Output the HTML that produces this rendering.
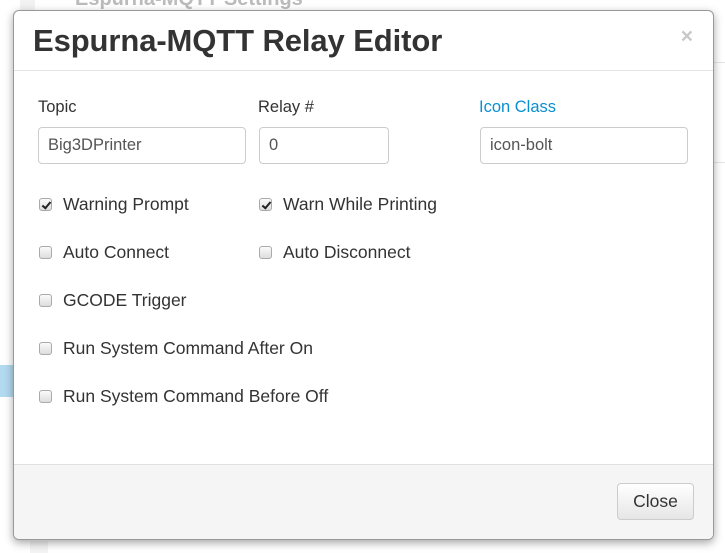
<!DOCTYPE html>
<html><head><meta charset="utf-8"><style>
*{box-sizing:border-box;margin:0;padding:0}
body{width:725px;height:553px;overflow:hidden;background:#fff;font-family:"Liberation Sans",Arial,sans-serif;position:relative;color:#333}
.bgt{position:absolute;left:75px;top:-12px;font-size:20px;font-weight:bold;color:#bbb}
.modal{position:absolute;left:13px;top:10px;width:701px;height:530px;background:#fff;border:1px solid #999;border-radius:6px;box-shadow:0 3px 9px rgba(0,0,0,.35);overflow:hidden}
.hdr{position:absolute;left:0;top:0;right:0;height:60px;border-bottom:1px solid #e5e5e5}
.title{position:absolute;left:19px;top:12px;font-size:31px;font-weight:bold;color:#333;letter-spacing:-0.1px}
.x{position:absolute;right:20px;top:14px;font-size:21px;font-weight:bold;color:#c8c8c8}
.lbl{position:absolute;font-size:16.5px;color:#333}
.inp{position:absolute;height:37px;border:1px solid #ccc;border-radius:4px;font-size:16.5px;padding:8px 9px;color:#555}
.cb{position:absolute;width:13px;height:13px;border:1px solid #aaa;border-radius:3px;background:linear-gradient(#fafafa,#ddd)}
.cb.on::after{content:"";position:absolute;left:3.5px;top:0.5px;width:3px;height:7px;border:solid #222;border-width:0 2px 2px 0;transform:rotate(40deg)}
.ct{position:absolute;font-size:17.5px;color:#333}
.ftr{position:absolute;left:0;right:0;bottom:0;height:75px;background:#f5f5f5;border-top:1px solid #e0e0e0}
.btn{position:absolute;right:19px;top:18px;width:77px;height:37px;border:1px solid #ccc;border-radius:4px;background:linear-gradient(#fff,#e6e6e6);font-size:17.5px;text-align:center;line-height:35px;color:#333}
</style></head><body>
<div class="bgt">Espurna-MQTT Settings</div>
<div style="position:absolute;left:20px;top:0;width:15px;height:10px;background:#f2f2f2"></div>
<div style="position:absolute;left:0;top:365px;width:13px;height:32px;background:#b3daf0"></div>
<div style="position:absolute;left:714px;top:62px;width:11px;height:1px;background:#e5e5e5"></div>
<div style="position:absolute;left:714px;top:162px;width:11px;height:1px;background:#e5e5e5"></div>
<div style="position:absolute;left:30px;top:541px;width:18px;height:12px;background:#f4f4f4"></div>
<div class="modal">
 <div class="hdr"><div class="title">Espurna-MQTT Relay Editor</div><div class="x">×</div></div>
 <div class="lbl" style="left:24px;top:87px">Topic</div>
 <div class="lbl" style="left:244px;top:87px">Relay #</div>
 <div class="lbl" style="left:465px;top:87px;color:#0a8fd0">Icon Class</div>
 <div class="inp" style="left:24px;top:116px;width:208px">Big3DPrinter</div>
 <div class="inp" style="left:245px;top:116px;width:130px">0</div>
 <div class="inp" style="left:466px;top:116px;width:208px">icon-bolt</div>

 <div class="cb on" style="left:25px;top:187px"></div><div class="ct" style="left:49px;top:183px">Warning Prompt</div>
 <div class="cb on" style="left:245px;top:187px"></div><div class="ct" style="left:269px;top:183px">Warn While Printing</div>
 <div class="cb" style="left:25px;top:235px"></div><div class="ct" style="left:49px;top:231px">Auto Connect</div>
 <div class="cb" style="left:245px;top:235px"></div><div class="ct" style="left:269px;top:231px">Auto Disconnect</div>
 <div class="cb" style="left:25px;top:283px"></div><div class="ct" style="left:49px;top:279px">GCODE Trigger</div>
 <div class="cb" style="left:25px;top:331px"></div><div class="ct" style="left:49px;top:327px">Run System Command After On</div>
 <div class="cb" style="left:25px;top:379px"></div><div class="ct" style="left:49px;top:375px">Run System Command Before Off</div>

 <div class="ftr"><div class="btn">Close</div></div>
</div>
</body></html>
